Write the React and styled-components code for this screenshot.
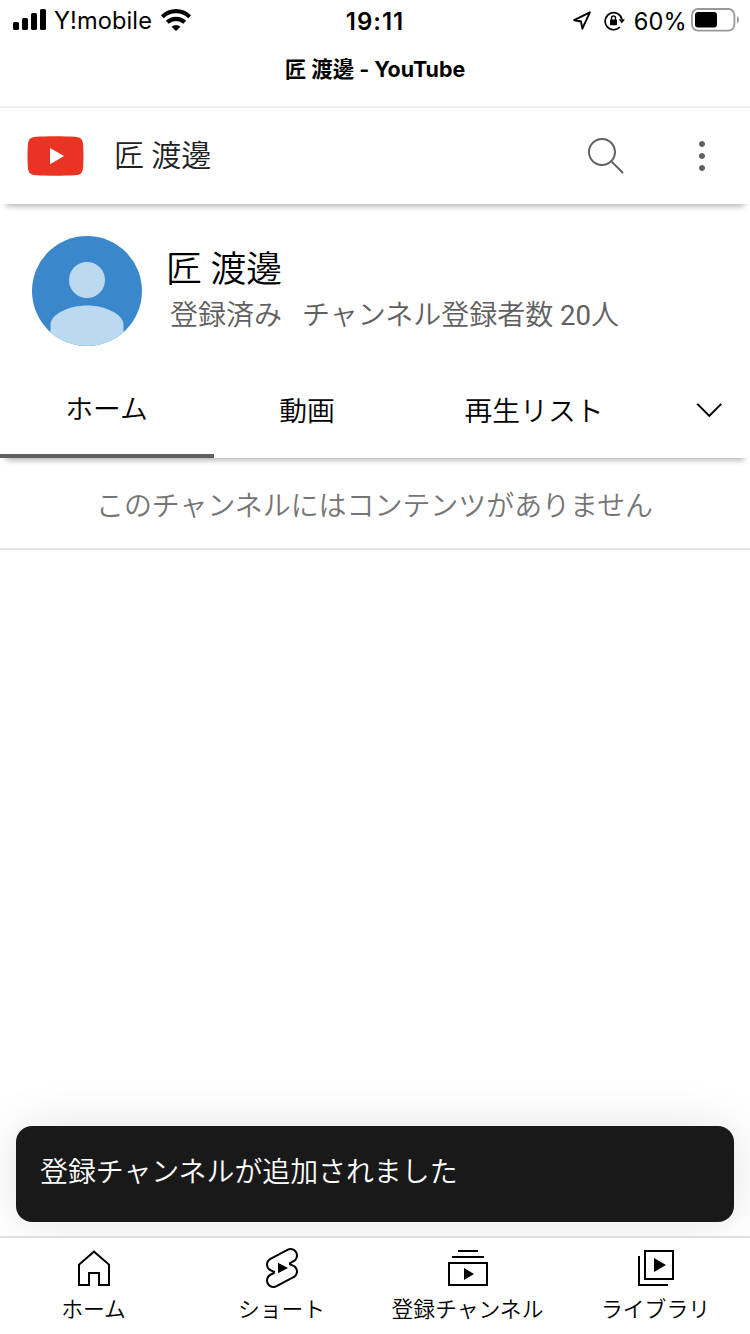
import React from "react";
import styled, { createGlobalStyle } from "styled-components";

const Global = createGlobalStyle`
  *, *::before, *::after { box-sizing: border-box; }
  html, body { margin: 0; padding: 0; background: #fff; }
  body { font-family: Roboto, "Noto Sans CJK JP", sans-serif; font-weight: 350; color: #0a0a0a; }
  svg { display: block; flex: none; }
`;

const Screen = styled.div`
  position: relative;
  width: 750px;
  height: 1334px;
  display: flex;
  flex-direction: column;
  overflow: hidden;
  background: #fff;
`;

const StatusBar = styled.div`
  height: 40px;
  flex: none;
  display: grid;
  grid-template-columns: 1fr auto 1fr;
  align-items: center;
  padding: 0 11px 0 13px;
  font-family: Inter, sans-serif;
  font-size: 24px;
  font-weight: 400;
  color: #000;
`;

const StatusGroup = styled.div`
  display: flex;
  align-items: center;
  justify-content: ${(p) => (p.$end ? "flex-end" : "flex-start")};
`;

const Carrier = styled.span`
  margin: 2px 9px 0 8px;
  line-height: 28px;
  font-size: 23.6px;
  letter-spacing: 0.1px;
`;

const Clock = styled.span`
  padding: 2px 2px 0 0;
  font-weight: 600;
  font-size: 24px;
  letter-spacing: 1px;
`;

const Percent = styled.span`
  margin: 2px 4px 0 9px;
  font-size: 23.6px;
  letter-spacing: 0.2px;
`;

const PageTitle = styled.div`
  height: 68px;
  flex: none;
  display: flex;
  justify-content: center;
  padding-top: 15px;
  border-bottom: 2px solid #efefef;
  font: 700 21.4px/28px Inter, "Noto Sans CJK JP", sans-serif;
  color: #000;
`;

const Header = styled.header`
  height: 96px;
  flex: none;
  display: flex;
  align-items: center;
  padding: 0 24px 0 27px;
  box-shadow: 0 8px 6px -6px rgba(0, 0, 0, 0.32);
`;

const HeaderTitle = styled.h1`
  flex: 1;
  margin: 0 0 0 30px;
  font-size: 30px;
  line-height: 40px;
  font-weight: 350;
  color: #212121;
`;

const HeaderActions = styled.div`
  display: flex;
  gap: 48px;
`;

const Profile = styled.section`
  height: 156px;
  flex: none;
  display: flex;
  padding: 32px 32px 0;
`;

const ProfileText = styled.div`
  margin-left: 24px;
  padding-top: 11px;
`;

const ChannelName = styled.h2`
  margin: 0;
  font-size: 35.8px;
  line-height: 46px;
  font-weight: 350;
  color: #000;
`;

const Meta = styled.div`
  display: flex;
  gap: 20px;
  padding-left: 4px;
  font-size: 28px;
  line-height: 46px;
  color: #606060;
`;

const Count = styled.span`
  font-weight: 400;
  font-size: 27.6px;
`;

const Tabs = styled.nav`
  height: 98px;
  flex: none;
  display: flex;
  box-shadow: 0 8px 6px -6px rgba(0, 0, 0, 0.32);
`;

const Tab = styled.div`
  width: ${(p) => p.$width}px;
  display: flex;
  align-items: center;
  justify-content: center;
  padding: 5px 1px 0 0;
  font-size: 27.8px;
  line-height: 40px;
  color: #000;
  border-bottom: ${(p) => (p.$active ? "4px solid #606060" : "0")};
`;

const TabMore = styled.div`
  flex: 1;
  display: flex;
  align-items: center;
  padding: 2px 0 0 18px;
`;

const EmptyMessage = styled.p`
  height: 92px;
  flex: none;
  margin: 0;
  padding: 2px 1px 0 0;
  display: flex;
  align-items: center;
  justify-content: center;
  border-bottom: 2px solid #e5e5e5;
  font-size: 27.95px;
  color: #757575;
`;

const Spacer = styled.main`
  flex: 1;
`;

const Toast = styled.div`
  position: absolute;
  left: 16px;
  right: 16px;
  bottom: 112px;
  height: 96px;
  display: flex;
  align-items: center;
  padding: 0 24px 9px;
  border-radius: 16px;
  background: #191919;
  color: #fff;
  font-size: 27.9px;
  box-shadow: 0 0 48px rgba(0, 0, 0, 0.11);
`;

const BottomNav = styled.nav`
  position: relative;
  height: 98px;
  flex: none;
  display: grid;
  grid-template-columns: 188px 188px 184px 192px;
  margin-right: -2px;
  border-top: 2px solid #e0e0e0;
  background: #fff;
`;

const NavItem = styled.div`
  display: flex;
  flex-direction: column;
  align-items: center;
  padding-top: 6px;
  color: #000;
`;

const NavLabel = styled.span`
  padding: 2px 1px 0 0;
  font-size: 21.8px;
  line-height: 32px;
  white-space: nowrap;
`;

const ICONS = {
  search:
    "m20.87 20.17-5.59-5.59C16.35 13.35 17 11.75 17 10c0-3.87-3.13-7-7-7s-7 3.13-7 7 3.13 7 7 7c1.75 0 3.35-.65 4.58-1.71l5.59 5.59.7-.71zM10 16c-3.31 0-6-2.69-6-6s2.69-6 6-6 6 2.69 6 6-2.69 6-6 6z",
  more:
    "M12 16.5c.83 0 1.5.67 1.5 1.5s-.67 1.5-1.5 1.5-1.5-.67-1.5-1.5.67-1.5 1.5-1.5zM10.5 12c0 .83.67 1.5 1.5 1.5s1.5-.67 1.5-1.5-.67-1.5-1.5-1.5-1.5.67-1.5 1.5zm0-6c0 .83.67 1.5 1.5 1.5s1.5-.67 1.5-1.5-.67-1.5-1.5-1.5-1.5.67-1.5 1.5z",
  chevron: "m18 9.28-6.35 6.35-6.37-6.35.72-.71 5.64 5.65 5.65-5.65z",
  home: "m12 4.44 7 6.09V20h-4v-6H9v6H5v-9.47l7-6.09m0-1.32-8 6.96V21h6v-6h4v6h6V10.08l-8-6.96z",
  shorts:
    "M10 14.65v-5.3L15 12l-5 2.65zm7.77-4.33-1.2-.5L18 9.06c1.84-.96 2.53-3.23 1.56-5.06s-3.24-2.53-5.07-1.56L6 6.94c-1.29.68-2.07 2.04-2 3.49.07 1.42.93 2.67 2.22 3.25.03.01 1.2.5 1.2.5L6 14.93c-1.83.97-2.53 3.24-1.56 5.07.97 1.83 3.24 2.53 5.07 1.56l8.5-4.5c1.29-.68 2.06-2.04 1.99-3.49-.07-1.42-.94-2.68-2.23-3.25zm-.23 5.86-8.5 4.5c-1.34.71-3.01.2-3.72-1.14-.71-1.34-.2-3.01 1.14-3.72l2.04-1.08v-1.21l-.69-.28-1.11-.46c-.99-.41-1.65-1.35-1.7-2.41-.05-1.06.52-2.06 1.46-2.56l8.5-4.5c1.34-.71 3.01-.2 3.72 1.14.71 1.34.2 3.01-1.14 3.72L15.5 9.26v1.21l1.8.74c.99.41 1.65 1.35 1.7 2.41.05 1.06-.52 2.06-1.46 2.56z",
  subscriptions:
    "M10 18v-6l5 3-5 3zm7-15H7v1h10V3zm3 3H4v1h16V6zm2 3H2v12h20V9zM3 10h18v10H3V10z",
  library: "m11 7 6 3.5-6 3.5V7zm7 13H4V6H3v15h15v-1zm3-2H6V3h15v15zM7 17h13V4H7v13z",
};

const Icon = ({ name, color = "#000" }) => (
  <svg width="48" height="48" viewBox="0 0 24 24" fill={color}>
    <path d={ICONS[name]} />
  </svg>
);

const Signal = () => (
  <svg width="33" height="22" viewBox="0 0 33 22">
    <rect x="0" y="13" width="6" height="8" rx="1.6" />
    <rect x="9" y="9" width="6" height="12" rx="1.6" />
    <rect x="18" y="4" width="6" height="17" rx="1.6" />
    <rect x="27" y="0" width="6" height="21" rx="1.6" />
  </svg>
);

const Wifi = () => (
  <svg width="30" height="22" viewBox="0 0 30 22" fill="none" stroke="#000">
    <path d="M1.3 7.8C9 .2 21 .2 28.700 7.8" strokeWidth="4.200" />
    <path d="M6.300 13.200C11.200 8.700 18.800 8.700 23.700 13.200" strokeWidth="4.200" />
    <path d="M15 22l-4.500-4.300q4.500-3.600 9 0z" fill="#000" stroke="none" />
  </svg>
);

const LocationArrow = () => (
  <svg width="18" height="19" viewBox="0 0 18 19" fill="none" stroke="#000" strokeWidth="1.9" strokeLinejoin="round">
    <path d="M16.8 1.3L1.2 9.2l6.8 1.3 1.4 7.200z" />
  </svg>
);

const RotationLock = () => (
  <svg width="21" height="20" viewBox="0 0 21 20" fill="none" stroke="#000" strokeWidth="1.7">
    <path d="M15.9 16A8.5 8.5 0 1 1 17.9 8.2" />
    <path d="M14.6 8.3h6.3l-3.1 4.2z" fill="#000" stroke="none" />
    <rect x="6" y="8.6" width="7" height="5.7" rx="0.8" fill="#000" stroke="none" />
    <path d="M7.5 9V7a2 2 0 0 1 4 0v2" strokeWidth="1.4" />
  </svg>
);

const StatusIcons = styled.div`
  display: flex;
  align-items: center;
  gap: 13px;
  padding-top: 1px;
`;

const Battery = () => (
  <svg width="48" height="24" viewBox="0 0 48 24">
    <rect x="1" y="1" width="42.4" height="21.6" rx="6" fill="none" stroke="#999" strokeWidth="1.8" />
    <rect x="4" y="4" width="22" height="15.4" rx="3.2" />
    <path d="M46 8v7.4q2-1.2 2-3.7T46 8z" fill="#999" />
  </svg>
);

const Logo = () => (
  <svg width="57" height="40" viewBox="0 0 57 40">
    <path
      d="M28.5.2c8 0 14 .2 19.500.5 5.500.4 7.600 2.500 8.100 7.800.5 7 .5 16 0 23-.5 5.300-2.600 7.400-8.100 7.800-11 .6-28 .6-39 0-5.500-.4-7.600-2.500-8.100-7.800-.5-7-.5-16 0-23C1.400 3.200 3.500 1.100 9 .7 14.500.4 20.500.2 28.500.2z"
      fill="#e93323"
    />
    <path d="M23 12v16.300L37 20z" fill="#fff" />
  </svg>
);

const Avatar = () => (
  <svg width="110" height="110" viewBox="0 0 110 110">
    <clipPath id="avatar-circle">
      <circle cx="55" cy="55" r="55" />
    </clipPath>
    <g clipPath="url(#avatar-circle)">
      <rect width="110" height="110" fill="#3b87cb" />
      <circle cx="55" cy="44" r="18" fill="#bbdaef" />
      <path d="M18.500 110V89C18.500 78 37 69.500 55 69.500S91.500 78 91.500 89v21z" fill="#bbdaef" />
    </g>
  </svg>
);

const NAV = [
  ["home", "ホーム"],
  ["shorts", "ショート"],
  ["subscriptions", "登録チャンネル"],
  ["library", "ライブラリ"],
];

export default function App() {
  return (
    <Screen lang="ja">
      <Global />
      <StatusBar>
        <StatusGroup>
          <Signal />
          <Carrier>Y!mobile</Carrier>
          <Wifi />
        </StatusGroup>
        <Clock>19:11</Clock>
        <StatusGroup $end>
          <StatusIcons>
            <LocationArrow />
            <RotationLock />
          </StatusIcons>
          <Percent>60%</Percent>
          <Battery />
        </StatusGroup>
      </StatusBar>
      <PageTitle>匠 渡邊 - YouTube</PageTitle>
      <Header>
        <Logo />
        <HeaderTitle>匠 渡邊</HeaderTitle>
        <HeaderActions>
          <Icon name="search" color="#606060" />
          <Icon name="more" color="#606060" />
        </HeaderActions>
      </Header>
      <Profile>
        <Avatar />
        <ProfileText>
          <ChannelName>匠 渡邊</ChannelName>
          <Meta>
            <span>登録済み</span>
            <span>
              チャンネル登録者数 <Count>20</Count>人
            </span>
          </Meta>
        </ProfileText>
      </Profile>
      <Tabs>
        <Tab $width={214} $active>ホーム</Tab>
        <Tab $width={187}>動画</Tab>
        <Tab $width={267}>再生リスト</Tab>
        <TabMore>
          <Icon name="chevron" />
        </TabMore>
      </Tabs>
      <EmptyMessage>このチャンネルにはコンテンツがありません</EmptyMessage>
      <Spacer />
      <Toast>登録チャンネルが追加されました</Toast>
      <BottomNav>
        {NAV.map(([icon, label]) => (
          <NavItem key={icon}>
            <Icon name={icon} />
            <NavLabel>{label}</NavLabel>
          </NavItem>
        ))}
      </BottomNav>
    </Screen>
  );
}
